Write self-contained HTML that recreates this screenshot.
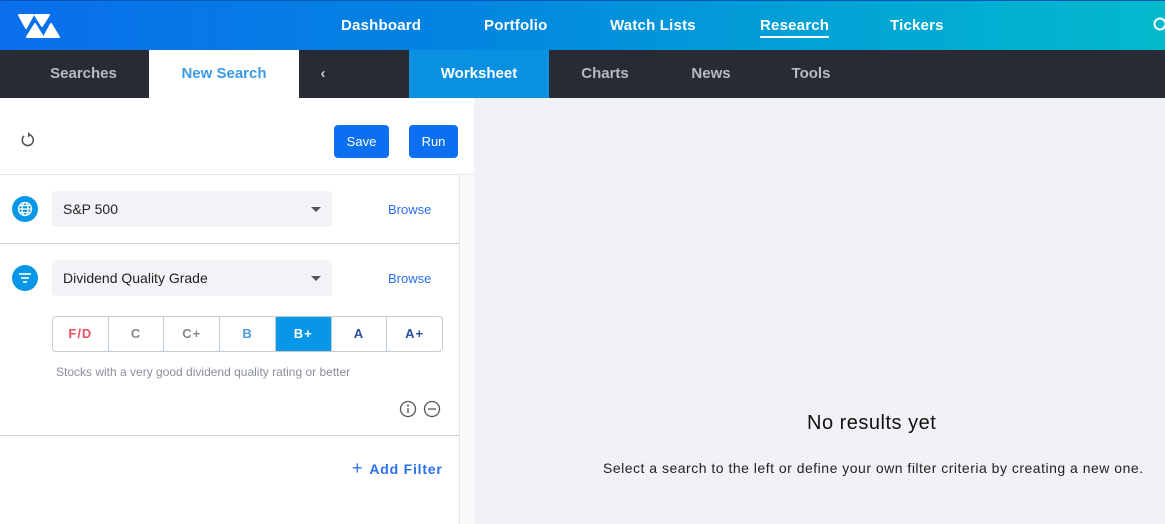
<!DOCTYPE html>
<html><head><style>
*{margin:0;padding:0;box-sizing:border-box}
body{width:1165px;height:524px;overflow:hidden;font-family:"Liberation Sans",sans-serif;background:#fff;position:relative}
.top{position:absolute;left:0;top:0;width:1165px;height:50px;background:linear-gradient(90deg,#0a6eec 0%,#0285e0 40%,#02a2d6 70%,#03bacd 100%);border-top:1px solid #0657b8}
.top a{position:absolute;top:16px;color:#fff;font-weight:bold;font-size:15px;letter-spacing:.2px}
.sub{position:absolute;left:0;top:50px;width:1165px;height:48px;background:#292b34}
.sub div{position:absolute;top:0;height:48px;line-height:48px;font-weight:bold;font-size:15px;color:#b8bac0;text-align:center}
.btn{position:absolute;top:125px;height:33px;background:#0a6ff0;color:#fff;border-radius:4px;font-size:13px;line-height:33px;text-align:center}
.sel{position:absolute;left:52px;width:280px;height:36px;background:#f2f3f6;border-radius:4px;font-size:14px;color:#222;line-height:36px;padding-left:11px}
.sel:after{content:"";position:absolute;right:11px;top:16px;border-left:5px solid transparent;border-right:5px solid transparent;border-top:5px solid #555}
.br{position:absolute;left:388px;color:#2a6ff0;font-size:13px}
.ic{position:absolute;left:12px;width:26px;height:26px;border-radius:50%;background:#0896e6}
.grades{position:absolute;left:52px;top:316px;width:391px;height:36px;border:1px solid #c2ccd6;border-radius:4px;display:flex;overflow:hidden}
.grades div{flex:1;text-align:center;line-height:34px;font-weight:bold;font-size:13px;letter-spacing:1px;border-left:1px solid #c2ccd6}
.grades div:first-child{border-left:none}
</style></head><body>
<div class="top">
<svg style="position:absolute;left:0;top:-1px" width="70" height="50"><g fill="#fff" stroke="#fff" stroke-width="2" stroke-linejoin="round"><polygon points="19,15 33,15 26,28"/><polygon points="35,15 49,15 42,26"/><polygon points="27,37 35,24 43,37"/><polygon points="44,37 51,24 59,37"/></g></svg>
<a style="left:341px">Dashboard</a><a style="left:484px">Portfolio</a><a style="left:610px">Watch Lists</a>
<a style="left:760px;border-bottom:2px solid #fff;padding-bottom:2px">Research</a><a style="left:890px">Tickers</a>
<svg style="position:absolute;left:1153px;top:16px" width="14" height="16"><circle cx="7" cy="7" r="5.5" stroke="#fff" stroke-width="2" fill="none"/></svg>
</div>
<div class="sub">
<div style="left:0;width:149px;padding-left:18px">Searches</div>
<div style="left:149px;width:150px;background:#fff;color:#3a9ae6">New Search</div>
<div style="left:299px;width:48px;color:#ccc">‹</div>
<div style="left:409px;width:140px;background:#0a90e0;color:#fff">Worksheet</div>
<div style="left:549px;width:112px">Charts</div>
<div style="left:661px;width:100px">News</div>
<div style="left:761px;width:100px">Tools</div>
</div>
<svg style="position:absolute;left:20px;top:132px" width="16" height="16" viewBox="0 0 16 16"><path d="M4 4 A5.5 5.5 0 1 0 8 2.5" stroke="#555" stroke-width="1.6" fill="none"/><polygon points="8,0 8,5.5 11,2.7" fill="#555"/></svg>
<div class="btn" style="left:334px;width:55px">Save</div>
<div class="btn" style="left:409px;width:49px">Run</div>
<div style="position:absolute;left:0;top:174px;width:474px;height:1px;background:#e6e8ec"></div>
<div style="position:absolute;left:459px;top:175px;width:15px;height:349px;background:#fafafb;border-left:1px solid #e3e5e8"></div>
<div style="position:absolute;left:474px;top:98px;width:691px;height:426px;background:#f1f2f6"></div>
<div class="ic" style="top:196px"><svg width="26" height="26" viewBox="0 0 26 26"><g stroke="#fff" stroke-width="1.3" fill="none"><circle cx="13" cy="13" r="6.5"/><ellipse cx="13" cy="13" rx="3" ry="6.5"/><line x1="6.5" y1="13" x2="19.5" y2="13"/><line x1="7.5" y1="9.5" x2="18.5" y2="9.5"/><line x1="7.5" y1="16.5" x2="18.5" y2="16.5"/></g></svg></div>
<div class="sel" style="top:191px">S&amp;P 500</div>
<div class="br" style="top:202px">Browse</div>
<div style="position:absolute;left:0;top:243px;width:459px;height:1px;background:#c6ced8"></div>
<div class="ic" style="top:265px"><svg width="26" height="26" viewBox="0 0 26 26"><g stroke="#fff" stroke-width="1.6"><line x1="7" y1="9" x2="19" y2="9"/><line x1="9" y1="13" x2="17" y2="13"/><line x1="11" y1="17" x2="15" y2="17"/></g></svg></div>
<div class="sel" style="top:260px">Dividend Quality Grade</div>
<div class="br" style="top:271px">Browse</div>
<div class="grades">
<div style="color:#f0505f">F/D</div><div style="color:#888">C</div><div style="color:#888">C+</div><div style="color:#4a9de0">B</div><div style="background:#0896e6;color:#fff">B+</div><div style="color:#2a4fa0">A</div><div style="color:#2a4fa0">A+</div>
</div>
<div style="position:absolute;left:56px;top:365px;font-size:12px;color:#8a8e99">Stocks with a very good dividend quality rating or better</div>
<svg style="position:absolute;left:399px;top:400px" width="44" height="18"><g stroke="#555" stroke-width="1.3" fill="none"><circle cx="9" cy="9" r="7.5"/><circle cx="33" cy="9" r="7.5"/><line x1="29" y1="9" x2="37" y2="9"/><line x1="9" y1="8" x2="9" y2="13"/></g><circle cx="9" cy="5.5" r="1" fill="#555"/></svg>
<div style="position:absolute;left:0;top:435px;width:459px;height:1px;background:#c6ced8"></div>
<div style="position:absolute;left:352px;top:458px;color:#2a6ff0;font-weight:bold;font-size:14px;letter-spacing:.8px"><span style="font-weight:normal;font-size:18px;margin-right:6px">+</span>Add Filter</div>
<div style="position:absolute;left:807px;top:412px;font-size:20px;color:#111;letter-spacing:.5px">No results yet</div>
<div style="position:absolute;left:603px;top:460px;font-size:14px;color:#222;letter-spacing:.5px">Select a search to the left or define your own filter criteria by creating a new one.</div>
</body></html>
